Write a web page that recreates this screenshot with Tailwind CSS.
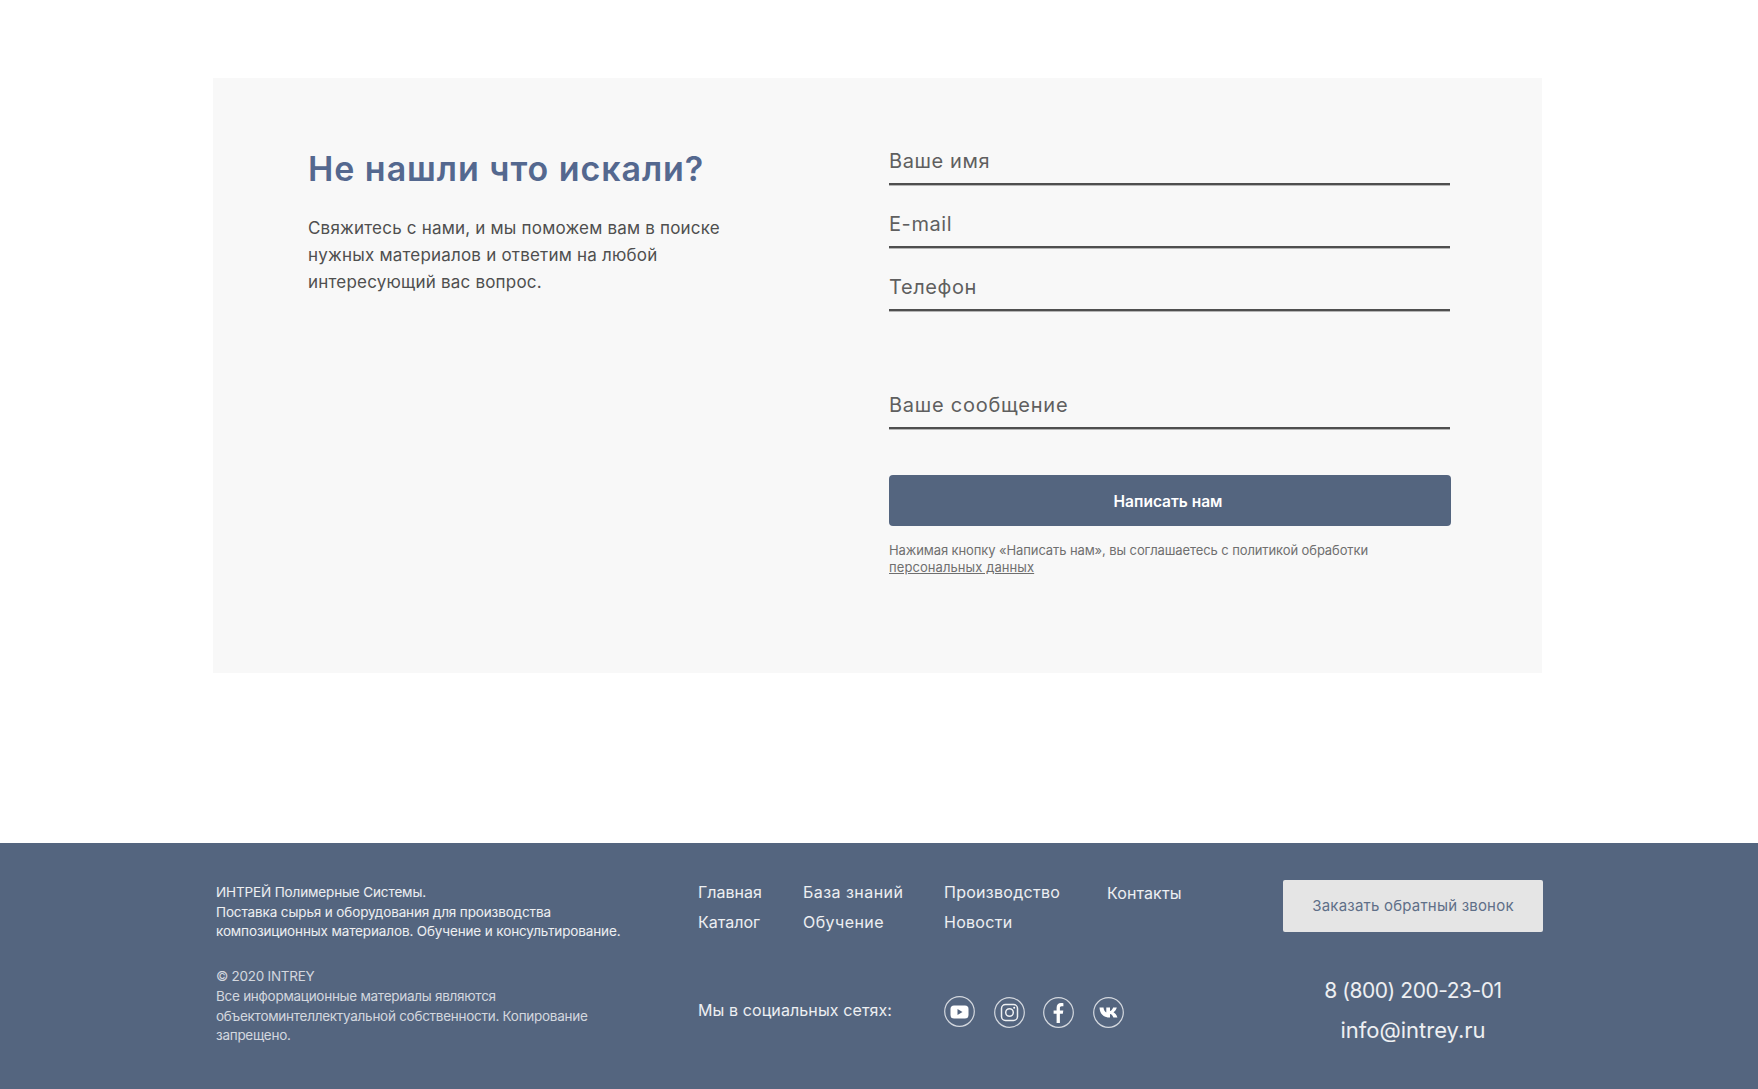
<!DOCTYPE html>
<html lang="ru">
<head>
  <meta charset="UTF-8" />
  <meta name="viewport" content="width=device-width, initial-scale=1.0" />
  <title>Контакты</title>
  <script src="https://cdn.jsdelivr.net/npm/@tailwindcss/browser@4"></script>
</head>
<body class="bg-white font-['Inter',sans-serif]">

  <!-- Contact card -->
  <main class="pt-[78px] pl-[213px]">
    <section class="flex w-[1329px] h-[595px] bg-[#f8f8f8]">
      <div class="w-[676px] pl-[95px] pt-[71px]">
        <h2 class="text-[34px] leading-[40px] font-semibold tracking-[0.95px] text-[#54688f]">Не нашли что искали?</h2>
        <p class="mt-[26px] text-[17px] leading-[27px] tracking-[0.2px] text-[#4f4f4f]">Свяжитесь с нами, и мы поможем вам в поиске<br />нужных материалов и ответим на любой<br />интересующий вас вопрос.</p>
      </div>

      <form class="w-[562px] pt-[62px]">
        <div class="w-[561px] h-[45px] border-b-2 border-[#4f4f4f] shadow-[0_1px_0_#b5b5b5] text-[20px] leading-[42px] tracking-[0.6px] text-[#5f5f5f]">Ваше имя</div>
        <div class="w-[561px] mt-[18px] h-[45px] border-b-2 border-[#4f4f4f] shadow-[0_1px_0_#b5b5b5] text-[20px] leading-[42px] tracking-[0.6px] text-[#5f5f5f]">E-mail</div>
        <div class="w-[561px] mt-[18px] h-[45px] border-b-2 border-[#4f4f4f] shadow-[0_1px_0_#b5b5b5] text-[20px] leading-[42px] tracking-[0.6px] text-[#5f5f5f]">Телефон</div>
        <div class="w-[561px] mt-[73px] h-[45px] border-b-2 border-[#4f4f4f] shadow-[0_1px_0_#b5b5b5] text-[20px] leading-[42px] tracking-[0.75px] text-[#5f5f5f]">Ваше сообщение</div>
        <button type="button" class="block mt-[46px] w-full h-[51px] pr-[4px] pt-[2px] rounded-[4px] bg-[#54657f] text-[15.5px] font-semibold text-white">Написать нам</button>
        <p class="mt-[16px] text-[13px] leading-[17px] tracking-[-0.1px] text-[#6f6f6f]">Нажимая кнопку «Написать нам», вы соглашаетесь с политикой обработки<br /><a href="#" class="underline tracking-[0.08px]">персональных данных</a></p>
      </form>
    </section>
  </main>

  <!-- Footer -->
  <footer class="flex mt-[170px] h-[246px] pl-[216px] bg-[#54657f] text-white">
    <div class="w-[482px] pt-[40px] text-[13.5px] leading-[19.7px]">
      <p class="tracking-[-0.13px] text-white/90">ИНТРЕЙ Полимерные Системы.<br />Поставка сырья и оборудования для производства<br />композиционных материалов. Обучение и консультирование.</p>
      <p class="mt-[25px] tracking-[-0.27px] text-white/75">© 2020 INTREY<br />Все информационные материалы являются<br />объектоминтеллектуальной собственности. Копирование<br />запрещено.</p>
    </div>

    <div class="w-[585px] pt-[34px] text-[16px] tracking-[0.1px] text-white/90">
      <nav class="flex h-[92px]">
        <ul class="w-[105px] leading-[30px] tracking-[0px]"><li>Главная</li><li>Каталог</li></ul>
        <ul class="w-[141px] leading-[30px] tracking-[0.45px]"><li>База знаний</li><li>Обучение</li></ul>
        <ul class="w-[163px] leading-[30px] tracking-[0.28px]"><li>Производство</li><li>Новости</li></ul>
        <ul class="pt-px leading-[30px]"><li>Контакты</li></ul>
      </nav>
      <div class="flex items-center mt-[27px] h-[33px]">
        <span class="w-[246px] -mt-[5px]">Мы в социальных сетях:</span>
        <div class="flex gap-[18.5px]">
          <a href="#" class="size-[31px] -mt-px">
            <svg viewBox="0 0 31 31" class="size-[31px]"><circle cx="15.5" cy="15.5" r="14.8" fill="none" stroke="#fff" stroke-opacity=".75" stroke-width="1.2"/><rect x="6.5" y="9.5" width="18" height="13" rx="3.5" fill="#fff"/><path d="M13.5 13l5 3-5 3z" fill="#54657f"/></svg>
          </a>
          <a href="#" class="size-[31px]">
            <svg viewBox="0 0 31 31" class="size-[31px]"><circle cx="15.5" cy="15.5" r="14.8" fill="none" stroke="#fff" stroke-opacity=".75" stroke-width="1.2"/><rect x="7.5" y="7.5" width="16" height="16" rx="4" fill="none" stroke="#fff" stroke-opacity=".9" stroke-width="1.5"/><circle cx="15.5" cy="15.5" r="3.8" fill="none" stroke="#fff" stroke-opacity=".9" stroke-width="1.5"/><circle cx="20.2" cy="10.8" r="1" fill="#fff"/></svg>
          </a>
          <a href="#" class="size-[31px]">
            <svg viewBox="0 0 31 31" class="size-[31px]"><circle cx="15.5" cy="15.5" r="14.8" fill="none" stroke="#fff" stroke-opacity=".75" stroke-width="1.2"/><path d="M13.6 26V16.8h-3v-3.3h3v-2.6C13.6 7.9 15.3 6 18 6c1.1 0 2 .1 2.4.2v3h-1.7c-1.4 0-1.8.7-1.8 1.8v2.5h3.4l-.5 3.3h-2.9V26z" fill="#fff"/></svg>
          </a>
          <a href="#" class="size-[31px]">
            <svg viewBox="0 0 31 31" class="size-[31px]"><circle cx="15.5" cy="15.5" r="14.8" fill="none" stroke="#fff" stroke-opacity=".75" stroke-width="1.2"/><path d="M4.500 10.500h4c.2 2.500 1.500 4.500 2.800 5v-5H15v3.600c1.300-.3 2.600-1.800 3.100-3.600h3.700c-.5 2.300-2.100 4-3.300 4.800 1.200.6 3.100 2.100 3.900 5.200h-4c-.6-1.900-2-3.300-3.400-3.500v3.500h-.9c-5.500 0-9.300-3.800-9.600-10z" fill="#fff" transform="translate(2 0)"/></svg>
          </a>
        </div>
      </div>
    </div>

    <div class="w-[260px] pt-[37px] text-center">
      <a href="#" class="flex items-center justify-center h-[52px] rounded-[2px] bg-[#e5e5e5] text-[15px] tracking-[0.2px] text-[#5f6f88]">Заказать обратный звонок</a>
      <p class="mt-[39px] text-[21px] leading-[40px] tracking-[-0.45px] text-white/90">8 (800) 200-23-01</p>
      <p class="-mt-px text-[22px] leading-[40px] text-white/90">info@intrey.ru</p>
    </div>
  </footer>

</body>
</html>
